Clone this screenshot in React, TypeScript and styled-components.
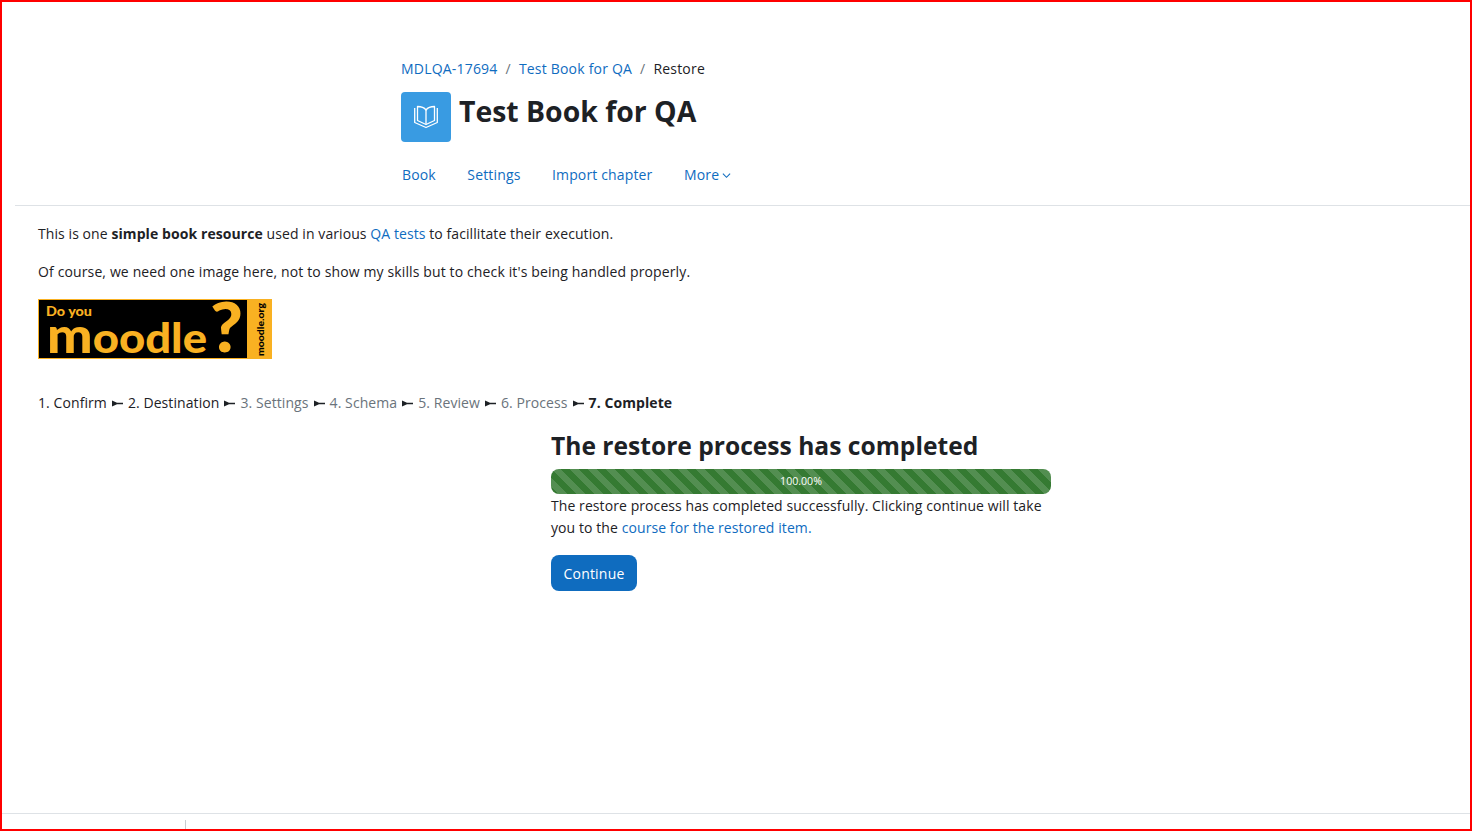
import React from "react";
import styled, { createGlobalStyle } from "styled-components";

const Global = createGlobalStyle`
  html, body { margin: 0; padding: 0; background: #fff; }
  body { font-family: "Open Sans", "Noto Sans", sans-serif; color: #1d2125; font-size: 14px; letter-spacing: 0.08px; overflow: hidden; }
  * { box-sizing: border-box; }
`;
const Frame = styled.div`
  width: 1472px; height: 831px; border: 2px solid #ff0000; display: flex; flex-direction: column; background: #fff;
`;
const Main = styled.div`flex: 1; display: flex; flex-direction: column; padding-left: 13px;`;
const Header = styled.header`
  height: 204px; padding: 56px 0 0 386px; display: flex; flex-direction: column; border-bottom: 1px solid #dee2e6;
`;
const Crumbs = styled.nav`display: flex; align-items: center; height: 20px; letter-spacing: 0.2px;`;
const Sep = styled.span`color: #6a737b; margin: 0 8px;`;
const A = styled.a`color: #0f6cbf; text-decoration: none;`;
const TitleRow = styled.div`display: flex; margin-top: 14px; gap: 8px; height: 50px;`;
const IconBox = styled.div`
  width: 50px; height: 50px; background: #399be2; border-radius: 4px; display: flex; align-items: center; justify-content: center;
`;
const Title = styled.h1`margin: 0; font-size: 28.4px; font-weight: 700; line-height: 38px; letter-spacing: 0;`;
const Tabs = styled.nav`display: flex; margin: 22px 0 0 1px; gap: 31.5px; line-height: 22px; letter-spacing: 0.15px;`;
const More = styled(A)`display: inline-flex; align-items: center; gap: 3px;`;
const Content = styled.main`padding: 17px 0 0 23px;`;
const P = styled.p<{ $wide?: boolean }>`margin: 0 0 16px; line-height: 22px; letter-spacing: ${p => (p.$wide ? "0.13px" : "inherit")};`;
const Logo = styled.svg`display: block; margin-top: 16px;`;
const Steps = styled.div`margin-top: 33px; line-height: 22px; display: flex; gap: 5px; align-items: center;`;
const Step = styled.span<{ $muted?: boolean; $bold?: boolean }>`
  color: ${p => (p.$muted ? "#6a737b" : "#1d2125")}; font-weight: ${p => (p.$bold ? 700 : 400)};
`;
const Arrow = styled.svg`flex: none;`;
const Panel = styled.section`width: 500px; margin: 15px 0 0 513px;`;
const H2 = styled.h2`margin: 0 0 6px; font-size: 24.6px; line-height: 34px; font-weight: 700; letter-spacing: 0;`;
const Bar = styled.div`
  height: 25px; padding-bottom: 1px; border-radius: 8px; color: #fff; font-size: 10.6px; letter-spacing: 0; display: flex; align-items: center; justify-content: center;
  background-color: #357a32;
  background-image: linear-gradient(45deg, rgba(255,255,255,.15) 25%, transparent 25%, transparent 50%, rgba(255,255,255,.15) 50%, rgba(255,255,255,.15) 75%, transparent 75%, transparent);
  background-size: 18px 18px;
`;
const Msg = styled.p`margin: 1px 0 16px; line-height: 22px;`;
const Btn = styled.button`
  display: block; width: 86px; height: 36px; border: 0; border-radius: 8px; background: #0f6cbf; color: #fff;
  font: inherit; letter-spacing: 0.2px; padding: 0;
`;
const Footer = styled.footer`height: 16px; border-top: 1px solid #dee2e6; padding: 6px 0 0 183px; display: flex;`;
const Tick = styled.span`width: 1px; height: 9px; background: #c8ccd0;`;

const LOGO = "#f9b122";
const LOGO_FONT = "Lato, 'Open Sans', sans-serif";

const Sp = () => (
  <Arrow width="11" height="7" viewBox="0 0 11 7"><path d="M0 0.5 L5 2.8 H11 V4.2 H5 L0 6.5 Z" fill="#1d2125" /></Arrow>
);

export default function App() {
  return (
    <Frame>
      <Global />
      <Main>
        <Header>
          <Crumbs>
            <A href="#">MDLQA-17694</A><Sep>/</Sep>
            <A href="#">Test Book for QA</A><Sep>/</Sep>
            <span>Restore</span>
          </Crumbs>
          <TitleRow>
            <IconBox>
              <svg width="24" height="24" viewBox="0 0 24 24" fill="none" stroke="#fff" strokeWidth="1.3" strokeLinejoin="round">
                <path d="M0.7 3 V17.5 L12 22.5 L23.3 17.5 V3" />
                <path d="M3.5 1.5 V15.5 L12 19.5 L20.5 15.5 V1.5 C16 1.5 13.5 3 12 5 C10.5 3 8 1.5 3.5 1.5 Z" />
                <path d="M12 5 V19.5" />
              </svg>
            </IconBox>
            <Title>Test Book for QA</Title>
          </TitleRow>
          <Tabs>
            <A href="#">Book</A>
            <A href="#">Settings</A>
            <A href="#">Import chapter</A>
            <More href="#">More
              <svg width="9" height="9" viewBox="0 0 10 10" fill="none" stroke="#0f6cbf" strokeWidth="1.2"><path d="M1 3 L5 7 L9 3" /></svg>
            </More>
          </Tabs>
        </Header>
        <Content>
          <P>This is one <b>simple book resource</b> used in various <A href="#">QA tests</A> to facillitate their execution.</P>
          <P $wide>Of course, we need one image here, not to show my skills but to check it's being handled properly.</P>
          <Logo width="234" height="60" viewBox="0 0 234 60">
            <rect width="234" height="60" fill={LOGO} />
            <rect x="1" y="1" width="208" height="58" fill="#000" />
            <text x="8" y="17" fontFamily={LOGO_FONT} fontWeight="900" fontSize="13" letterSpacing="0" textLength="46" lengthAdjust="spacingAndGlyphs" fill={LOGO}>Do you</text>
            <text x="9" y="54" fontFamily={LOGO_FONT} fontWeight="900" fontSize="42" letterSpacing="0" textLength="160" lengthAdjust="spacingAndGlyphs" fill={LOGO} style={{ textTransform: "lowercase" }}>
              <tspan fontSize="50">M</tspan>oodle
            </text>
            <text x="172" y="53" fontFamily={LOGO_FONT} fontWeight="900" fontSize="68" letterSpacing="0" textLength="33" lengthAdjust="spacingAndGlyphs" fill={LOGO}>?</text>
            <text transform="translate(226 57) rotate(-90)" fontFamily={LOGO_FONT} fontWeight="900" fontSize="10" letterSpacing="0" textLength="53" lengthAdjust="spacingAndGlyphs" fill="#000">moodle.org</text>
          </Logo>
          <Steps>
            <Step>1. Confirm</Step><Sp />
            <Step>2. Destination</Step><Sp />
            <Step $muted>3. Settings</Step><Sp />
            <Step $muted>4. Schema</Step><Sp />
            <Step $muted>5. Review</Step><Sp />
            <Step $muted>6. Process</Step><Sp />
            <Step $bold>7. Complete</Step>
          </Steps>
          <Panel>
            <H2>The restore process has completed</H2>
            <Bar>100.00%</Bar>
            <Msg>The restore process has completed successfully. Clicking continue will take you to the <A href="#">course for the restored item.</A></Msg>
            <Btn>Continue</Btn>
          </Panel>
        </Content>
      </Main>
      <Footer><Tick /></Footer>
    </Frame>
  );
}
